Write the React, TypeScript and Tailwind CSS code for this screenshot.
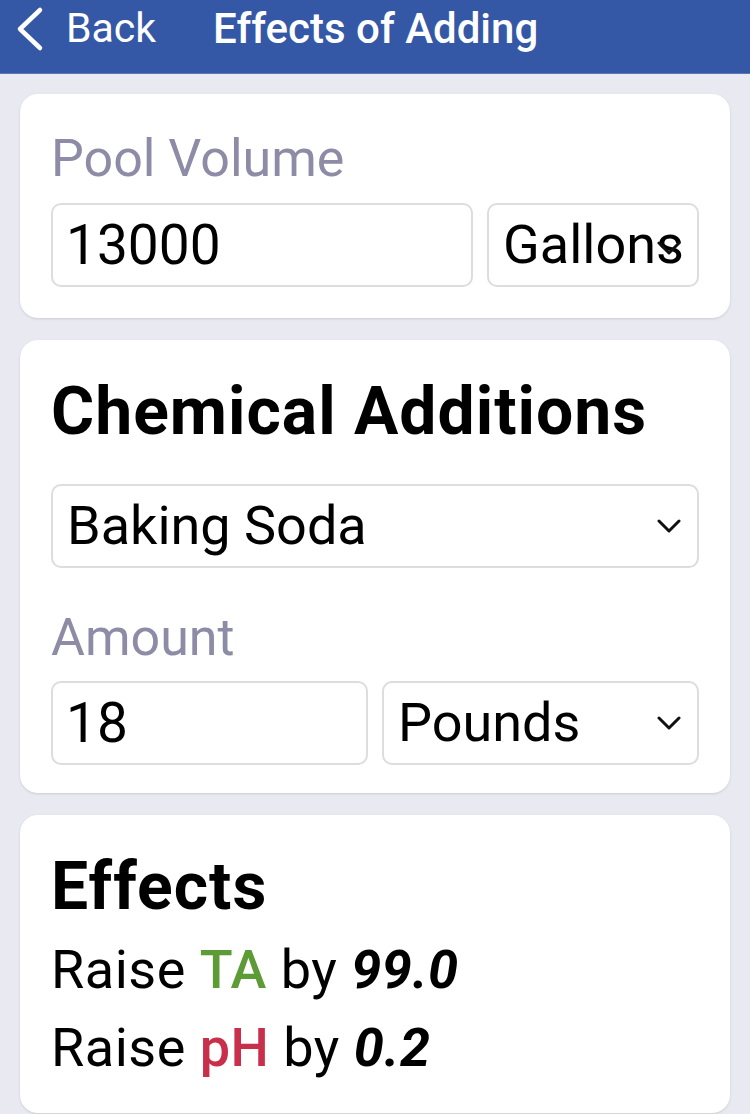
function Chevron() {
  return (
    <svg width="24" height="14" viewBox="0 0 24 14" fill="none" className="shrink-0">
      <polyline points="2,2 12,12 22,2" stroke="#111" strokeWidth="3" strokeLinecap="round" strokeLinejoin="round" />
    </svg>
  );
}

function BackChevron() {
  return (
    <svg width="30" height="46" viewBox="0 0 30 46" fill="none" className="shrink-0">
      <polyline points="26,4 6,23 26,42" stroke="#fff" strokeWidth="4.5" strokeLinecap="round" strokeLinejoin="round" />
    </svg>
  );
}

function Field({ value, className = "" }: { value: string; className?: string }) {
  return (
    <div className={`h-[84px] flex items-center px-[13px] rounded-[10px] border-2 border-[#dcdce1] bg-white text-[55px] text-black ${className}`}>
      {value}
    </div>
  );
}

function Select({ value, className = "", overlap = false }: { value: string; className?: string; overlap?: boolean }) {
  return (
    <div className={`relative h-[84px] flex items-center justify-between pl-[14px] pr-[16px] rounded-[10px] border-2 border-[#dcdce1] bg-white text-[54px] text-black overflow-hidden ${className}`}>
      <span className="whitespace-nowrap">{value}</span>
      {overlap ? (
        <span className="absolute right-[16px] top-[36px]">
          <Chevron />
        </span>
      ) : (
        <Chevron />
      )}
    </div>
  );
}

export default function App() {
  return (
    <div className="min-h-[1114px] bg-[#e9e9f1] font-['Roboto',sans-serif] leading-none">
      <header className="h-[74px] bg-[#3458a5] flex items-center pb-[16px] text-white border-b border-[#5a75b3]">
        <span className="ml-[14px]">
          <BackChevron />
        </span>
        <span className="ml-[22px] text-[41px]">Back</span>
        <span className="ml-[57px] text-[42px] font-medium">Effects of Adding</span>
      </header>

      <main className="px-[20px] pt-[20px] flex flex-col gap-[22px]">
        <section className="bg-white rounded-[18px] shadow-sm px-[31px] pt-[37px] pb-[31px]">
          <div className="text-[52px] leading-[56px] text-[#8d8ba6]">Pool Volume</div>
          <div className="mt-[16px] flex gap-[14px]">
            <Field value="13000" className="flex-1" />
            <Select value="Gallons" className="w-[212px]" overlap />
          </div>
        </section>

        <section className="bg-white rounded-[18px] shadow-sm px-[31px] pt-[40px] pb-[28px]">
          <h2 className="text-[66px] leading-[64px] font-bold tracking-[1px] text-black">Chemical Additions</h2>
          <Select value="Baking Soda" className="mt-[40px] h-[82px]" />
          <div className="mt-[42px] text-[52px] leading-[56px] text-[#8d8ba6]">Amount</div>
          <div className="mt-[15px] grid grid-cols-2 gap-[14px]">
            <Field value="18" />
            <Select value="Pounds" />
          </div>
        </section>

        <section className="bg-white rounded-[18px] shadow-sm px-[31px] pt-[40px] pb-[26px]">
          <h2 className="text-[66px] leading-[64px] font-bold tracking-[1px] text-black">Effects</h2>
          <div className="mt-[12px] text-[54px] leading-[78px] tracking-[0.5px] text-black">
            <div>
              Raise <span className="font-medium text-[#5d9b37]">TA</span> by{" "}
              <span className="font-bold italic">99.0</span>
            </div>
            <div>
              Raise <span className="font-medium text-[#c72f4b]">pH</span> by{" "}
              <span className="font-bold italic">0.2</span>
            </div>
          </div>
        </section>
      </main>
    </div>
  );
}
